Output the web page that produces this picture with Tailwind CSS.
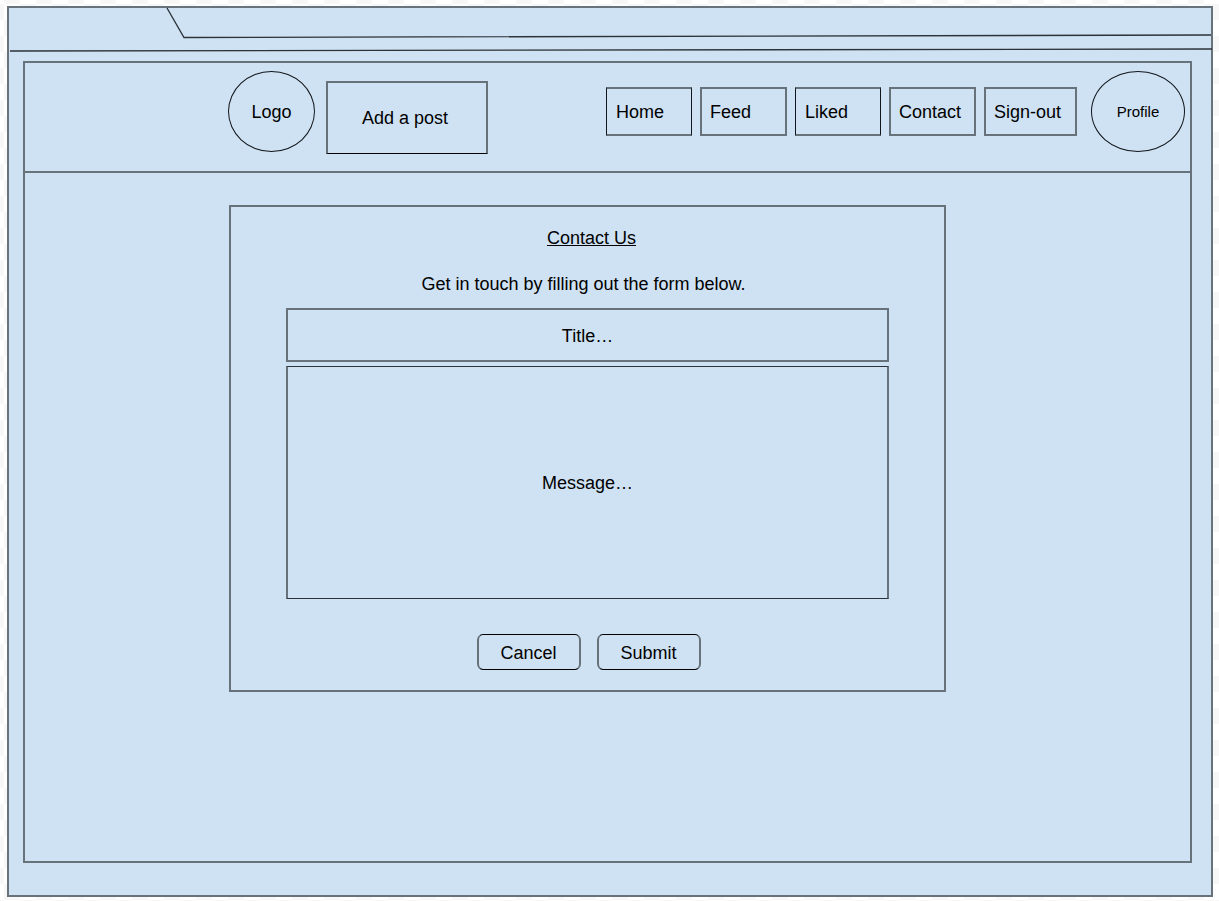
<!DOCTYPE html>
<html lang="en">
<head>
<meta charset="utf-8">
<meta name="viewport" content="width=device-width, initial-scale=1">
<title>Contact Us</title>
<script src="https://cdn.jsdelivr.net/npm/@tailwindcss/browser@4"></script>
</head>
<body class="flex min-h-screen flex-col bg-[repeating-conic-gradient(#f7f7f7_0_25%,#ffffff_0_50%)] bg-[length:32px_32px] bg-[position:-12px_-12px] pt-[6px] pr-[6px] pb-1 pl-[7px] font-['Liberation_Sans',Arial,sans-serif] text-lg leading-7 text-black">
  <div class="flex grow flex-col border-2 border-[#68727b] bg-[#cfe2f3]">
    <!-- Browser tab strip -->
    <svg class="block h-[53px] w-full overflow-visible" viewBox="0 0 1202 53" preserveAspectRatio="none" fill="none" stroke="#2c3238" stroke-width="1.33" aria-hidden="true">
      <path d="M158 0 175 29.5 1202 27"/>
      <path d="M1 43 1203 41"/>
    </svg>
    <div class="mr-[19px] mb-8 ml-[14px] flex grow flex-col border-2 border-[#68727b]">
      <header class="flex h-[110px] items-start border-b-2 border-[#68727b] pt-2 pr-[5px] pl-[203px]">
        <a href="#" class="flex h-[81px] w-[87px] items-center justify-center rounded-[50%] border border-[#11161b]">Logo</a>
        <button type="button" class="mt-[10px] ml-[11px] h-[73px] w-[162px] border-2 border-b border-[#68727b] border-b-black pr-1">Add a post</button>
        <nav class="mt-4 ml-auto flex gap-2">
          <a href="#" class="flex h-[49px] w-[86px] items-center border-x border-y-2 border-x-[#11161b] border-y-[#68727b] pl-[9px]">Home</a>
          <a href="#" class="flex h-[49px] w-[87px] items-center border-2 border-[#68727b] pl-2">Feed</a>
          <a href="#" class="flex h-[49px] w-[86px] items-center border-x border-y-2 border-x-[#11161b] border-y-[#68727b] pl-[9px]">Liked</a>
          <a href="#" class="flex h-[49px] w-[87px] items-center border-2 border-[#68727b] pl-2">Contact</a>
          <a href="#" class="flex h-[49px] w-[93px] items-center border-2 border-[#68727b] pl-2">Sign-out</a>
        </nav>
        <a href="#" class="ml-[14px] flex h-[81px] w-[94px] items-center justify-center rounded-[50%] border border-[#11161b] text-[15px]">Profile</a>
      </header>
      <main class="pt-8 pl-[204px]">
        <form class="flex max-w-[717px] flex-col border-2 border-[#68727b] px-[55px] pt-[17px] pb-5">
          <h1 class="pl-2 text-center underline">Contact Us</h1>
          <p class="mt-[18px] pr-2 text-center">Get in touch by filling out the form below.</p>
          <input type="text" aria-label="Title" placeholder="Title…" class="mt-[10px] h-[54px] border-2 border-[#68727b] pt-[2px] text-center placeholder:text-black">
          <textarea aria-label="Message" placeholder="Message…" class="mt-1 h-[233px] resize-none border-x-2 border-y border-x-[#68727b] border-y-[#2c3238] pt-[102px] text-center placeholder:text-black"></textarea>
          <div class="mt-[35px] flex justify-center gap-4 pl-[2px]">
            <button type="button" class="h-9 w-[104px] rounded-md border-x-2 border-y border-x-[#68727b] border-y-black pt-[2px]">Cancel</button>
            <button type="submit" class="h-9 w-[104px] rounded-md border-x-2 border-y border-x-[#68727b] border-y-black pt-[2px]">Submit</button>
          </div>
        </form>
      </main>
    </div>
  </div>
</body>
</html>
